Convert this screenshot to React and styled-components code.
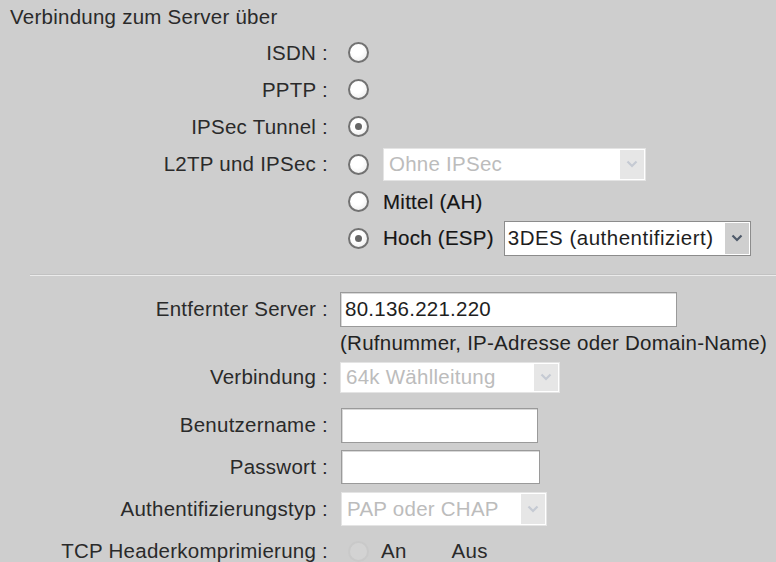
import React from 'react'
import styled, { createGlobalStyle } from 'styled-components'

const GlobalStyle = createGlobalStyle`
  html, body {
    margin: 0;
    padding: 0;
    background: #cecece;
  }
  body {
    font-family: "Liberation Sans", Arial, sans-serif;
    font-size: 20.5px;
    letter-spacing: 0.25px;
    color: #2a2a2a;
  }
`

function Chevron({ color }) {
  return (
    <svg width="12" height="8" viewBox="0 0 12 8">
      <polyline points="1.5,1.5 6,6 10.5,1.5" fill="none" stroke={color} strokeWidth="2.2" />
    </svg>
  )
}

function Select({ value, width, height, disabled }) {
  return (
    <SelectBox $w={width} $h={height} $disabled={disabled}>
      <SelectText $disabled={disabled}>{value}</SelectText>
      <ArrowBox $disabled={disabled}>
        <Chevron color={disabled ? '#c5cad3' : '#4f5a6a'} />
      </ArrowBox>
    </SelectBox>
  )
}

export default function App() {
  return (
    <Page>
      <GlobalStyle />
      <Heading>Verbindung zum Server über</Heading>

      <Row $h={37}>
        <Label>ISDN :</Label>
        <Controls>
          <Radio />
        </Controls>
      </Row>
      <Row $h={37}>
        <Label>PPTP :</Label>
        <Controls>
          <Radio />
        </Controls>
      </Row>
      <Row $h={37}>
        <Label>IPSec Tunnel :</Label>
        <Controls>
          <Radio $checked />
        </Controls>
      </Row>
      <Row $h={38}>
        <Label>L2TP und IPSec :</Label>
        <Controls $gap={14}>
          <Radio />
          <Select value="Ohne IPSec" width={263} height={33} disabled />
        </Controls>
      </Row>
      <Row $h={37}>
        <Label />
        <Controls $gap={14}>
          <Radio />
          <Option>Mittel (AH)</Option>
        </Controls>
      </Row>
      <Row $h={36}>
        <Label />
        <Controls $gap={14}>
          <Radio $checked />
          <Option>Hoch (ESP)</Option>
          <Select value="3DES (authentifiziert)" width={247} height={35} pull />
        </Controls>
      </Row>

      <Separator />

      <Row $h={38}>
        <Label>Entfernter Server :</Label>
        <Controls>
          <TextField $w={337} $h={35}>80.136.221.220</TextField>
        </Controls>
      </Row>
      <Row $h={30}>
        <Label />
        <Controls>
          <Hint>(Rufnummer, IP-Adresse oder Domain-Name)</Hint>
        </Controls>
      </Row>
      <Row $h={38}>
        <Label>Verbindung :</Label>
        <Controls>
          <Select value="64k Wählleitung" width={220} height={31} disabled />
        </Controls>
      </Row>
      <Row $h={42} $top={8}>
        <Label>Benutzername :</Label>
        <Controls $shift={1}>
          <TextField $w={197} $h={35} />
        </Controls>
      </Row>
      <Row $h={42}>
        <Label>Passwort :</Label>
        <Controls $shift={1}>
          <TextField $w={199} $h={34} />
        </Controls>
      </Row>
      <Row $h={42}>
        <Label>Authentifizierungstyp :</Label>
        <Controls $shift={1}>
          <Select value="PAP oder CHAP" width={206} height={34} disabled />
        </Controls>
      </Row>
      <Row $h={42}>
        <Label>TCP Headerkomprimierung :</Label>
        <Controls $gap={12}>
          <Radio $disabled />
          <Option $plain>An</Option>
          <Spacer />
          <Option $plain>Aus</Option>
        </Controls>
      </Row>
    </Page>
  )
}

const Page = styled.div`
  width: 776px;
  height: 562px;
  overflow: hidden;
  background: #cecece;
`

const Heading = styled.div`
  height: 34px;
  display: flex;
  align-items: center;
  padding-left: 10px;
`

const Row = styled.div`
  display: flex;
  align-items: center;
  height: ${p => p.$h}px;
  margin-top: ${p => p.$top || 0}px;
`

const Label = styled.div`
  width: 328px;
  flex: none;
  text-align: right;
  white-space: nowrap;
`

const Controls = styled.div`
  display: flex;
  align-items: center;
  gap: ${p => p.$gap || 0}px;
  margin-left: ${p => 12 + (p.$shift || 0)}px;
  white-space: nowrap;
`

const Radio = styled.span`
  position: relative;
  flex: none;
  width: 17px;
  height: 17px;
  margin-left: 8px;
  border-radius: 50%;
  border: 2px solid ${p => (p.$disabled ? '#c9c9c9' : '#727272')};
  background: ${p => (p.$disabled ? '#d3d3d3' : 'radial-gradient(circle at 40% 35%, #ffffff 40%, #e6e6e6 100%)')};
  &::after {
    content: '';
    display: ${p => (p.$checked ? 'block' : 'none')};
    position: absolute;
    left: 50%;
    top: 50%;
    width: 7px;
    height: 7px;
    margin: -3.5px 0 0 -3.5px;
    border-radius: 50%;
    background: #666;
  }
`

const Option = styled.span`
  color: ${p => (p.$plain ? '#2a2a2a' : '#151515')};
  -webkit-text-stroke: ${p => (p.$plain ? '0' : '0.15px #151515')};
`

const Spacer = styled.span`
  width: 21px;
`

const SelectBox = styled.div`
  position: relative;
  box-sizing: border-box;
  width: ${p => p.$w}px;
  height: ${p => p.$h}px;
  display: flex;
  align-items: center;
  background: #ffffff;
  border: 1px solid ${p => (p.$disabled ? '#e4e4e4' : '#8c8c8c')};
  overflow: hidden;
  &:last-child:not(:first-child) {
    margin-left: ${p => (p.$disabled ? 0 : -4)}px;
  }
`

const SelectText = styled.span`
  flex: 1;
  overflow: hidden;
  white-space: nowrap;
  padding-left: ${p => (p.$disabled ? 5 : 3)}px;
  letter-spacing: ${p => (p.$disabled ? 0.25 : 0.5)}px;
  color: ${p => (p.$disabled ? '#bcbcbc' : '#1e1e1e')};
`

const ArrowBox = styled.div`
  flex: none;
  align-self: stretch;
  width: 24px;
  margin: 1px;
  display: flex;
  align-items: center;
  justify-content: center;
  background: ${p => (p.$disabled ? '#e6e6e6' : '#cfcfcf')};
`

const TextField = styled.div`
  box-sizing: border-box;
  width: ${p => p.$w}px;
  height: ${p => p.$h}px;
  display: flex;
  align-items: center;
  padding-left: 4px;
  background: #ffffff;
  border: 1px solid #9a9a9a;
  box-shadow: inset 1px 1px 0 #d8d8d8;
  color: #1e1e1e;
`

const Hint = styled.span`
  color: #222;
`

const Separator = styled.div`
  margin: 18px 0 14px 30px;
  height: 1px;
  background: #ebebeb;
  border-top: 1px solid #c2c2c2;
`
